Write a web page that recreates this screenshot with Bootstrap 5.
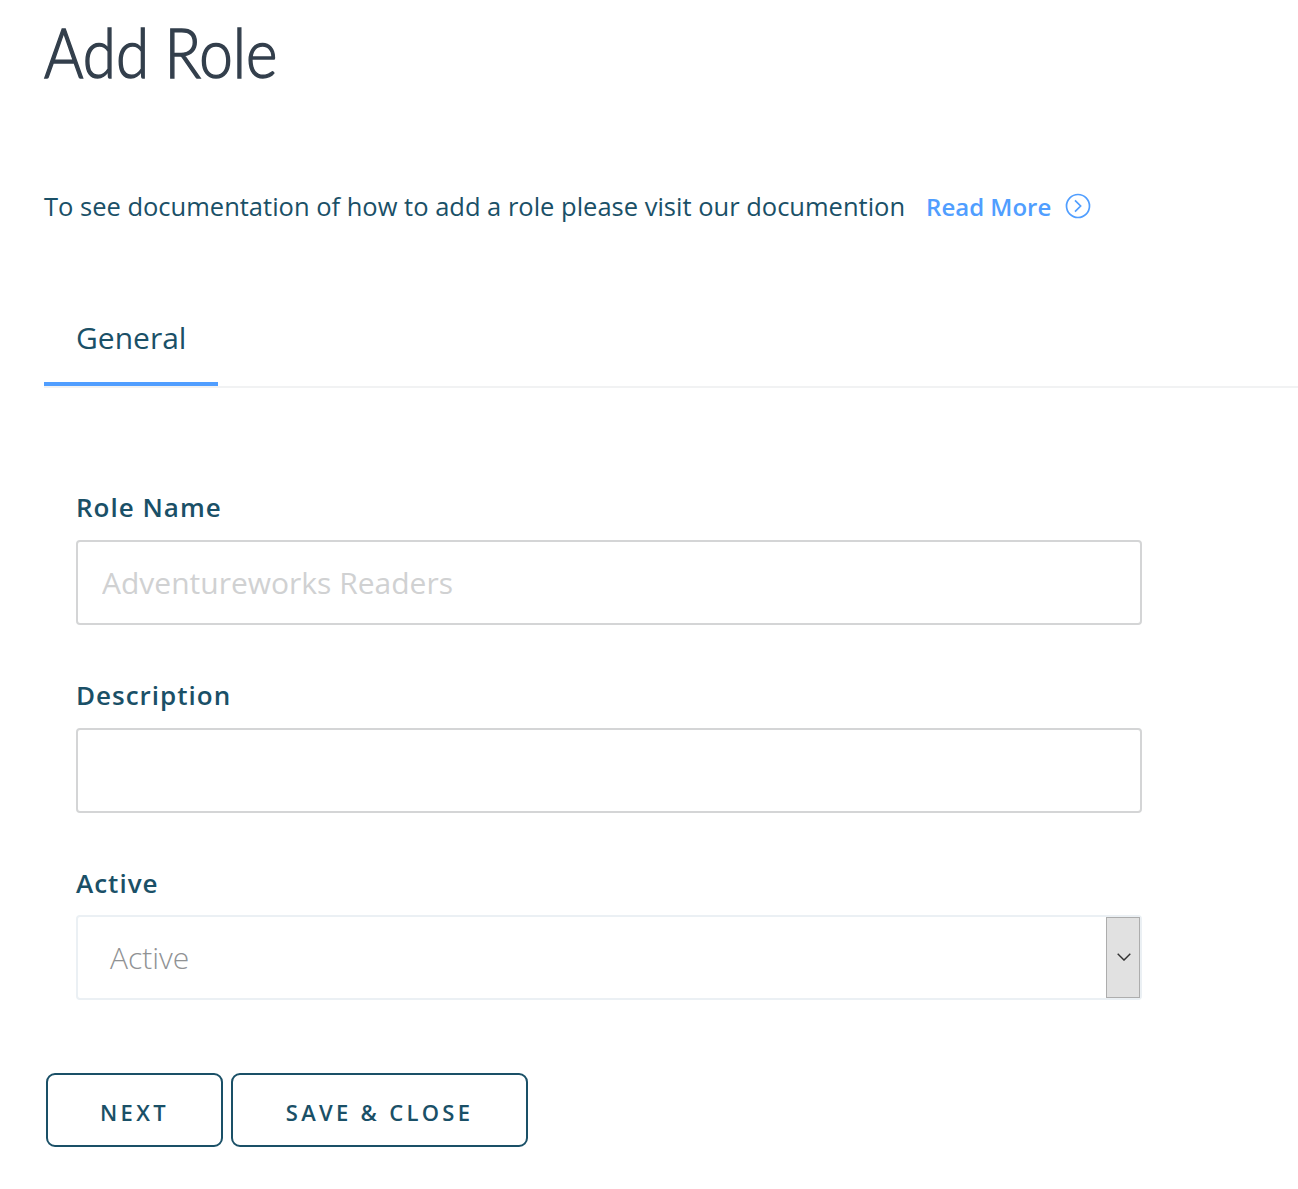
<!DOCTYPE html>
<html lang="en">
<head>
<meta charset="utf-8">
<meta name="viewport" content="width=device-width, initial-scale=1">
<title>Add Role</title>
<link href="https://cdn.jsdelivr.net/npm/bootstrap@5.3.0/dist/css/bootstrap.min.css" rel="stylesheet">
<style>
  body { font-family: "Open Sans", "Noto Sans", sans-serif; color: #1a5067; background: #fff; overflow: hidden; }
  .page-title { font-family: Lato, sans-serif; font-weight: 300; font-size: 68px; line-height: 100px; color: #333f4c; padding-top: 2px; margin-bottom: 84px; transform: scaleX(.885); transform-origin: 0 0; -webkit-text-stroke: 1.5px #333f4c; word-spacing: -1px; white-space: nowrap; }
  .page-body { padding-left: 44px; }
  .intro { font-size: 25.5px; line-height: 40px; margin-bottom: 64px; white-space: nowrap; }
  .more-link { font-size: 24px; font-weight: 600; color: #509eff; margin-left: 21px; }
  .more-link span { padding-top: 2px; line-height: 38px; }
  .more-link svg { margin-left: 14px; }
  .role-tabs { border-bottom: 2px solid #f1f2f3; }
  .role-tabs .nav-link { font-size: 30px; line-height: 40px; color: #1a5067; padding: 28px 32px 24px; border-bottom: 4px solid #509eff; width: 174px; }
  .role-form { width: 1098px; padding: 102px 0 0 32px; }
  .form-label { font-size: 26px; font-weight: 600; line-height: 34px; letter-spacing: 1px; margin-bottom: 16px; }
  .field-group { height: 188px; }
  .role-form .form-control { height: 85px; font-size: 30px; border: 2px solid #d4d5d6; border-radius: 4px; padding: 0 24px; }
  .role-form .form-control::placeholder { color: #d0d1d2; opacity: 1; }
  .select-box { height: 85px; margin-top: -1px; border: 2px solid #ebf0f4; border-radius: 4px; font-size: 30px; font-weight: 300; color: #909294; padding-left: 32px; }
  .select-arrow { width: 34px; background: #e1e1e1; border: 1px solid #adadad; padding: 0 0 1px 1px; }
  .actions { padding: 0 0 0 2px; margin-top: 73px; gap: 8px; }
  .actions .btn { height: 74px; border: 2px solid #1a5067; border-radius: 9px; color: #1a5067; font-size: 22px; font-weight: 600; letter-spacing: 3.3px; padding: 4px 0 0; }
  .btn-next { width: 177px; }
  .btn-save { width: 297px; }
</style>
</head>
<body>
<main class="page-body">
  <h1 class="page-title">Add Role</h1>
  <div class="intro d-flex align-items-center">
    <span class="intro-text">To see documentation of how to add a role please visit our documention</span>
    <a href="#" class="more-link text-decoration-none d-flex align-items-center"><span>Read More</span>
      <svg width="26" height="26" viewBox="0 0 26 26" fill="none" stroke="#509eff" stroke-width="1.7"><circle cx="13" cy="13" r="11.5"/><path d="M10 7.4 15.6 13 10 18.6"/></svg>
    </a>
  </div>
  <ul class="nav role-tabs">
    <li class="nav-item"><a class="nav-link active" href="#">General</a></li>
  </ul>
  <form class="role-form">
    <div class="field-group">
      <label class="form-label d-block" for="roleName">Role Name</label>
      <input id="roleName" class="form-control" type="text" placeholder="Adventureworks Readers">
    </div>
    <div class="field-group">
      <label class="form-label d-block" for="description">Description</label>
      <input id="description" class="form-control" type="text">
    </div>
    <div>
      <label class="form-label d-block">Active</label>
      <div class="select-box d-flex align-items-center justify-content-between" role="button">
        <span>Active</span>
        <span class="select-arrow d-flex align-items-center justify-content-center align-self-stretch">
          <svg width="14" height="8" viewBox="0 0 14 8" fill="none" stroke="#333" stroke-width="1.4"><path d="M.7.8 7 7.1 13.3.8"/></svg>
        </span>
      </div>
    </div>
  </form>
  <div class="actions d-flex">
    <button type="button" class="btn btn-next">NEXT</button>
    <button type="button" class="btn btn-save">SAVE &amp; CLOSE</button>
  </div>
</main>
<script src="https://cdn.jsdelivr.net/npm/bootstrap@5.3.0/dist/js/bootstrap.bundle.min.js"></script>
</body>
</html>
